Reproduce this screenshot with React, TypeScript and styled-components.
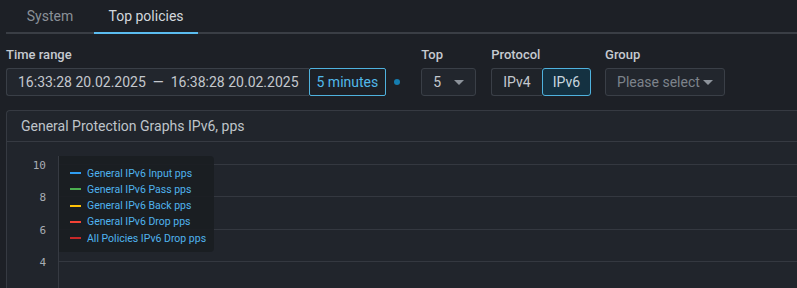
import React from 'react';
import styled, { createGlobalStyle } from 'styled-components';

const GlobalStyle = createGlobalStyle`
	html, body {
		margin: 0;
		padding: 0;
		background: #1d2026;
		overflow: hidden;
	}
	body {
		font-family: Roboto, 'Liberation Sans', sans-serif;
		color: #c9cdd3;
	}
`;

const Page = styled.div`
	padding: 0 0 0 6px;
	height: 288px;
`;

const TabBar = styled.div`
	display: flex;
	height: 34px;
	border-bottom: 2px solid #3a3e45;
	box-sizing: border-box;
`;

const Tab = styled.div<{ $active?: boolean }>`
	min-width: 88px;
	padding: 0 14.5px 1px;
	box-sizing: border-box;
	display: flex;
	align-items: center;
	justify-content: center;
	font-size: 14px;
	color: ${(p) => (p.$active ? '#d3d7dd' : '#8a9098')};
	border-bottom: 2px solid ${(p) => (p.$active ? '#5bbcef' : 'transparent')};
	margin-bottom: -2px;
`;

const Filters = styled.div`
	display: flex;
	align-items: flex-start;
	padding-top: 12px;
`;

const Field = styled.div<{ $gap?: number }>`
	display: flex;
	flex-direction: column;
	margin-right: ${(p) => p.$gap ?? 15}px;
`;

const Label = styled.div`
	font-size: 13px;
	font-weight: 500;
	color: #c6cad0;
	height: 18px;
	line-height: 18px;
	margin-bottom: 4px;
`;

const Controls = styled.div`
	display: flex;
	align-items: center;
`;

const Box = styled.div<{ $width?: number }>`
	height: 28px;
	box-sizing: border-box;
	display: flex;
	align-items: center;
	white-space: nowrap;
	background: #22262d;
	border: 1px solid #3a3f47;
	border-radius: 3px;
	font-size: 14px;
	color: #c4c8ce;
	width: ${(p) => (p.$width ? `${p.$width}px` : 'auto')};
`;

const TimeBox = styled(Box)`
	padding: 0 10px 0 11px;
	border-right: none;
	border-radius: 3px 0 0 3px;
	gap: 7px;
`;

const Accent = styled.div`
	height: 28px;
	box-sizing: border-box;
	display: flex;
	align-items: center;
	white-space: nowrap;
	padding: 0 7px;
	border: 1px solid #4fb2de;
	border-radius: 2px;
	font-size: 14px;
	color: #52b9ea;
`;

const Dot = styled.span`
	width: 6px;
	height: 6px;
	border-radius: 50%;
	background: #157db0;
	margin: 0 21px 0 8px;
`;

const SelectBox = styled(Box)<{ $muted?: boolean }>`
	padding: 0 11px;
	justify-content: space-between;
	color: ${(p) => (p.$muted ? '#7d838b' : '#c4c8ce')};
`;

const Caret = styled.span`
	width: 0;
	height: 0;
	border-left: 5px solid transparent;
	border-right: 5px solid transparent;
	border-top: 5px solid #8d939b;
	margin-top: 1px;
`;

const Toggle = styled.div<{ $active?: boolean }>`
	height: 28px;
	box-sizing: border-box;
	display: flex;
	align-items: center;
	padding: 0 ${(p) => (p.$active ? 10 : 11)}px;
	font-size: 14px;
	border: 1px solid ${(p) => (p.$active ? '#4fb2de' : '#3a3f47')};
	background: ${(p) => (p.$active ? '#143141' : '#1f2329')};
	color: ${(p) => (p.$active ? '#c9d6df' : '#c4c8ce')};
	border-radius: ${(p) => (p.$active ? '3px' : '3px 0 0 3px')};
	${(p) => (p.$active ? '' : 'border-right: none;')}
`;

const Card = styled.div`
	margin-top: 14px;
	background: #21252c;
	border: 1px solid #363a42;
	border-right: none;
	border-bottom: none;
	border-radius: 4px 0 0 0;
	height: 180px;
`;

const CardHeader = styled.div`
	height: 30px;
	display: flex;
	align-items: center;
	padding-left: 14px;
	font-size: 14px;
	color: #bfc4ca;
	border-bottom: 1px solid #363a42;
`;

const ChartBody = styled.div`
	display: flex;
	padding-top: 7px;
`;

const YAxis = styled.div`
	width: 51px;
	padding: 1px 12px 0 0;
	box-sizing: border-box;
	display: flex;
	flex-direction: column;
	align-items: flex-end;
`;

const Tick = styled.div`
	height: 32.4px;
	line-height: 32.4px;
	font-family: 'DejaVu Sans Mono', monospace;
	font-size: 11px;
	color: #a8adb4;
`;

const Plot = styled.div`
	position: relative;
	flex: 1;
	margin-top: 7px;
	border-left: 1px solid #363a42;
	height: 140px;
	padding-top: 8px;
`;

const GridLine = styled.div`
	height: 32.4px;
	box-sizing: border-box;
	border-top: 1px solid #343840;
`;

const Legend = styled.div`
	position: absolute;
	left: 0;
	top: 0;
	width: 155px;
	box-sizing: border-box;
	padding: 9px 0 6px 11px;
	background: rgba(26, 29, 34, 0.92);
	border-radius: 0 4px 4px 0;
`;

const LegendItem = styled.div`
	display: flex;
	align-items: center;
	height: 16.25px;
	font-size: 10.5px;
	color: #4fb3ee;
	white-space: nowrap;
`;

const Swatch = styled.span<{ $color: string }>`
	width: 11px;
	height: 2px;
	background: ${(p) => p.$color};
	margin-right: 6px;
`;

const legend = [
	{ color: '#2f9df2', label: 'General IPv6 Input pps' },
	{ color: '#4caf50', label: 'General IPv6 Pass pps' },
	{ color: '#ffc107', label: 'General IPv6 Back pps' },
	{ color: '#f44336', label: 'General IPv6 Drop pps' },
	{ color: '#c62828', label: 'All Policies IPv6 Drop pps' },
];

const ticks = ['10', '8', '6', '4'];

const App = () => {
	return (
		<Page>
			<GlobalStyle />
			<TabBar>
				<Tab>System</Tab>
				<Tab $active>Top policies</Tab>
			</TabBar>
			<Filters>
				<Field $gap={0}>
					<Label>Time range</Label>
					<Controls>
						<TimeBox>
							<span>16:33:28 20.02.2025</span>
							<span>—</span>
							<span>16:38:28 20.02.2025</span>
						</TimeBox>
						<Accent>5 minutes</Accent>
						<Dot />
					</Controls>
				</Field>
				<Field>
					<Label>Top</Label>
					<SelectBox $width={55}>
						<span>5</span>
						<Caret />
					</SelectBox>
				</Field>
				<Field $gap={14}>
					<Label>Protocol</Label>
					<Controls>
						<Toggle>IPv4</Toggle>
						<Toggle $active>IPv6</Toggle>
					</Controls>
				</Field>
				<Field>
					<Label>Group</Label>
					<SelectBox $width={120} $muted>
						<span>Please select</span>
						<Caret />
					</SelectBox>
				</Field>
			</Filters>
			<Card>
				<CardHeader>General Protection Graphs IPv6, pps</CardHeader>
				<ChartBody>
					<YAxis>
						{ticks.map((t) => (
							<Tick key={t}>{t}</Tick>
						))}
					</YAxis>
					<Plot>
						{ticks.map((t) => (
							<GridLine key={t} />
						))}
						<Legend>
							{legend.map((l) => (
								<LegendItem key={l.label}>
									<Swatch $color={l.color} />
									{l.label}
								</LegendItem>
							))}
						</Legend>
					</Plot>
				</ChartBody>
			</Card>
		</Page>
	);
};

export default App;
